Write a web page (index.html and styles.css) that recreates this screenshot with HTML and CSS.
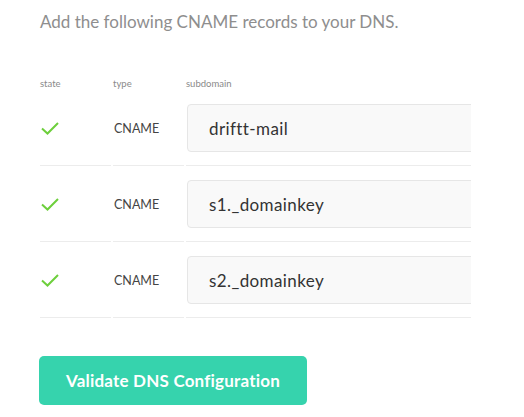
FILE: index.html
```html
<!DOCTYPE html>
<html>
<head>
<meta charset="utf-8">
<link rel="stylesheet" href="styles.css">
</head>
<body>
<div class="page">
  <h1 class="title">Add the following CNAME records to your DNS.</h1>
  <div class="records">
    <div class="head">state</div>
    <div class="head">type</div>
    <div class="head">subdomain</div>

    <div class="cell"><svg class="check" width="18" height="13" viewBox="0 0 18 13"><polyline points="1,6.5 6.5,11.5 17,1" fill="none" stroke="#6dcf3c" stroke-width="2"/></svg></div>
    <div class="cell type">CNAME</div>
    <div class="cell"><div class="field">driftt-mail</div></div>

    <div class="cell"><svg class="check" width="18" height="13" viewBox="0 0 18 13"><polyline points="1,6.5 6.5,11.5 17,1" fill="none" stroke="#6dcf3c" stroke-width="2"/></svg></div>
    <div class="cell type">CNAME</div>
    <div class="cell"><div class="field">s1._domainkey</div></div>

    <div class="cell"><svg class="check" width="18" height="13" viewBox="0 0 18 13"><polyline points="1,6.5 6.5,11.5 17,1" fill="none" stroke="#6dcf3c" stroke-width="2"/></svg></div>
    <div class="cell type">CNAME</div>
    <div class="cell"><div class="field">s2._domainkey</div></div>
  </div>
  <button class="validate">Validate DNS Configuration</button>
</div>
</body>
</html>
```
FILE: styles.css
```css
html, body {
  margin: 0;
  padding: 0;
  background: #ffffff;
}
.page {
  padding: 12px 0 0 40px;
  width: 431px;
  overflow: hidden;
  font-family: Lato, "Liberation Sans", sans-serif;
}
.title {
  margin: 0;
  font-size: 17px;
  font-weight: 400;
  line-height: 20px;
  color: #8e8e8e;
}
.records {
  margin-top: 45px;
  display: grid;
  grid-template-columns: 71px 71px 420px;
  column-gap: 2px;
}
.head {
  font-size: 9.5px;
  line-height: 14px;
  color: #8a8a8a;
}
.cell {
  display: flex;
  align-items: center;
  padding: 13px 0 13px;
  border-bottom: 1px solid #ececec;
  height: 48px;
}
.cell:nth-child(n+7) {
  padding-top: 14px;
}
.check {
  margin-left: 1px;
  display: block;
}
.type {
  font-size: 12.5px;
  color: #444444;
  padding-left: 1px;
}
.field {
  box-sizing: border-box;
  width: 100%;
  height: 48px;
  margin-left: 1px;
  border: 1px solid #e6e6e6;
  border-radius: 4px;
  background: #f9f9f9;
  display: flex;
  align-items: center;
  padding-left: 21px;
  font-size: 17px;
  letter-spacing: 0.4px;
  color: #333333;
}
.validate {
  display: block;
  margin-top: 38px;
  margin-left: -1px;
  width: 268px;
  height: 49px;
  border: 0;
  border-radius: 5px;
  background: #36d3ad;
  color: #ffffff;
  font-family: Lato, "Liberation Sans", sans-serif;
  font-size: 17px;
  letter-spacing: 0.2px;
  font-weight: 700;
  padding: 0;
}
```
